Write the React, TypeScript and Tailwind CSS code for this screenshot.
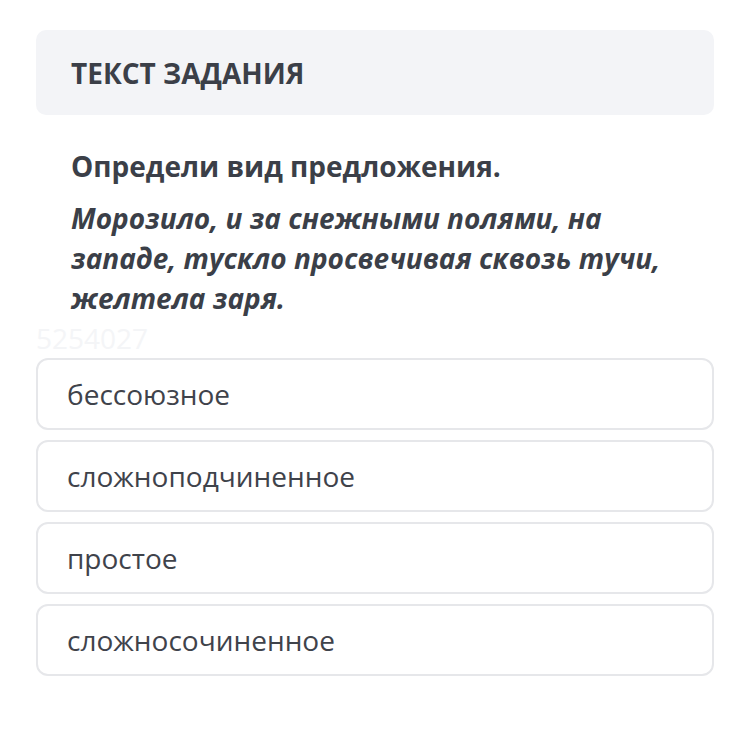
import React from 'react';

const options = ['бессоюзное', 'сложноподчиненное', 'простое', 'сложносочиненное'];

export default function App() {
  return (
    <div className="min-h-[750px] w-[750px] bg-white px-[36px] pt-[30px] font-['Open_Sans',sans-serif] text-[#3b3f48]">
      <div className="flex h-[85px] items-center rounded-[10px] bg-[#f3f4f7] px-[35px]">
        <h1 className="text-[28px] font-bold">ТЕКСТ ЗАДАНИЯ</h1>
      </div>
      <div className="px-[35px] pt-[33px]">
        <p className="text-[28px] font-bold leading-[36px]">Определи вид предложения.</p>
        <p className="mt-[14px] text-[28px] font-bold italic leading-[40px]">
          Морозило, и за снежными полями, на западе, тускло просвечивая сквозь тучи, желтела заря.
        </p>
      </div>
      <div className="text-[28px] leading-[40px] text-[#f4f5f7]">5254027</div>
      <div className="flex flex-col gap-[10px]">
        {options.map(o => (
          <div key={o} className="flex h-[72px] items-center rounded-[12px] border-2 border-[#e6e7ea] px-[29px] text-[28px] text-[#3f434b]">
            {o}
          </div>
        ))}
      </div>
    </div>
  );
}
